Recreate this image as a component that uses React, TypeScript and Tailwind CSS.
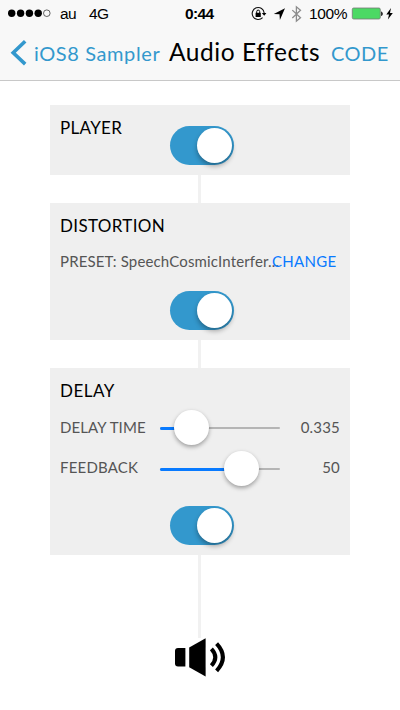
import type { ReactNode } from "react";

function Switch() {
  return (
    <div className="ml-[110px] flex h-[39px] w-16 items-center justify-end rounded-full bg-[#3398cd] pr-0.5">
      <div className="size-[35px] rounded-full bg-white shadow-[0_3px_5px_rgba(0,0,0,0.32)]" />
    </div>
  );
}

function Slider({ fill, offset }: { fill: string; offset: string }) {
  return (
    <div className={`h-[2px] w-[120px] rounded-full bg-[#b5b5b5] ${offset}`}>
      <div className={`flex h-[3px] items-center justify-end rounded-full bg-[#087aff] ${fill}`}>
        <div className="-mr-[17px] mb-[2px] size-[35px] shrink-0 rounded-full bg-white shadow-[0_2px_4px_rgba(0,0,0,0.35)]" />
      </div>
    </div>
  );
}

function Card({ size, children }: { size: string; children: ReactNode }) {
  return <section className={`w-[300px] bg-[#efefef] px-2.5 ${size}`}>{children}</section>;
}

function Connector({ size }: { size: string }) {
  return <div className={`mr-px w-[3px] bg-[#f1f1f1] ${size}`} />;
}

function StatusBar() {
  return (
    <div className="flex h-[27px] items-center pl-2 font-['Liberation_Sans',Arial,sans-serif] text-[15.5px] leading-[27px]">
      <svg width="43" height="9" viewBox="0 0 43 9">
        <circle cx="3.7" cy="4.2" r="3.7" />
        <circle cx="12.6" cy="4.2" r="3.7" />
        <circle cx="21.4" cy="4.2" r="3.7" />
        <circle cx="30.2" cy="4.2" r="3.7" />
        <circle cx="38.8" cy="4.2" r="3.3" fill="none" stroke="#222" strokeWidth=".7" />
      </svg>
      <span className="ml-[9px] w-[29px] tracking-[-0.5px]">au</span>
      <span className="w-[96px] tracking-[-0.6px]">4G</span>
      <span className="w-[66px] font-bold tracking-[-0.6px]">0:44</span>
      <svg width="55" height="20" viewBox="0 0 55 20">
        <path d="M11.6 13.6A6 6 0 1 1 13.2 9.1" fill="none" stroke="#111" strokeWidth="1.1" />
        <path d="M10.8 8.9h4.6l-2.2 2.9z" />
        <path d="M4.6 8.8h5.2v4.2H4.6z" />
        <path d="M5.7 9V7.6a1.5 1.5 0 0 1 3 0V9" fill="none" stroke="#000" strokeWidth="1" />
        <path d="M34 4.3 22.8 9.9l5.7.4.4 5.7z" />
        <path d="M41.3 6.1l8.2 7.7-4.1 3.4V2.8l4.1 3.5-8.2 7.7" fill="none" stroke="#8c8c8c" strokeWidth="1.3" />
      </svg>
      <span className="ml-[3px] w-[42px] tracking-[-0.4px]">100%</span>
      <svg width="43" height="14" viewBox="0 0 43 14">
        <rect x="1.3" y="1" width="28" height="11" rx="1.4" fill="#4cd964" stroke="#777" strokeWidth=".8" />
        <path d="M30.2 4.5c2 .6 2 4 0 4.6z" />
        <path d="M40 .9 35.3 7.6H38l-1.1 4.8 4.9-6.5H39z" />
      </svg>
    </div>
  );
}

export default function App() {
  return (
    <div className="h-[710px] w-[400px] overflow-hidden bg-white font-[Lato,sans-serif] whitespace-nowrap text-black">
      <header className="h-[81px] border-b border-[#c8c8c8] bg-[#f8f8f8]">
        <StatusBar />
        <nav className="flex h-[53px] pl-2.5">
          <svg className="mt-[12px]" width="18" height="28" viewBox="0 0 18 28">
            <path d="M15.2 2.2 3.2 13.8l12 11.3" fill="none" stroke="#3398cd" strokeWidth="3.6" />
          </svg>
          <span className="mt-[12px] ml-[6px] w-[135px] text-[20px] leading-[28px] tracking-[0.6px] text-[#3398cd]">iOS8 Sampler</span>
          <h1 className="mt-[8px] w-[162px] text-[24.5px] leading-[34px] tracking-[0.55px]">Audio Effects</h1>
          <span className="mt-[12px] text-[20px] leading-[28px] tracking-[0.5px] text-[#3398cd]">CODE</span>
        </nav>
      </header>
      <main className="flex flex-col items-center pt-6">
        <Card size="h-[70px]">
          <h2 className="h-[21px] pt-[11px] text-[17px] leading-[24px] tracking-[0.3px]">PLAYER</h2>
          <Switch />
        </Card>
        <Connector size="h-[28px]" />
        <Card size="h-[137px]">
          <h2 className="h-[46px] pt-[11px] text-[17px] leading-[24px] tracking-[0.35px]">DISTORTION</h2>
          <div className="flex h-[42px] text-[15px] leading-6">
            <span className="w-[212px] tracking-[0.15px] text-[#555]">PRESET: SpeechCosmicInterfer...</span>
            <span className="tracking-[0.3px] text-[#087aff]">CHANGE</span>
          </div>
          <Switch />
        </Card>
        <Connector size="h-[28px]" />
        <Card size="h-[187px]">
          <h2 className="h-[47px] pt-[11px] text-[17px] leading-[24px] tracking-[0.5px]">DELAY</h2>
          <div className="flex h-10 text-[15px] leading-6 text-[#555]">
            <span className="w-[100px] tracking-[0.1px]">DELAY TIME</span>
            <Slider fill="w-[32px]" offset="mt-[12px]" />
            <span className="flex-1 text-right tracking-[0.2px]">0.335</span>
          </div>
          <div className="flex h-[51px] text-[15px] leading-6 text-[#555]">
            <span className="w-[100px] tracking-[0.2px]">FEEDBACK</span>
            <Slider fill="w-[82px]" offset="mt-[13px]" />
            <span className="flex-1 text-right tracking-[0.2px]">50</span>
          </div>
          <Switch />
        </Card>
        <Connector size="h-[83px]" />
        <svg width="52" height="40" viewBox="0 0 52 40">
          <path d="M4 10h7.4v18.5H4a3 3 0 0 1-3-3V13a3 3 0 0 1 3-3z" />
          <path d="M15.2 9.4 31.6.2v38.3l-16.4-9.2z" />
          <path d="M37.4 10.8q7.8 8.4 0 16.8M42.6 5.6q12.6 13.6 0 27.2" fill="none" stroke="#000" strokeWidth="4" />
        </svg>
      </main>
    </div>
  );
}
